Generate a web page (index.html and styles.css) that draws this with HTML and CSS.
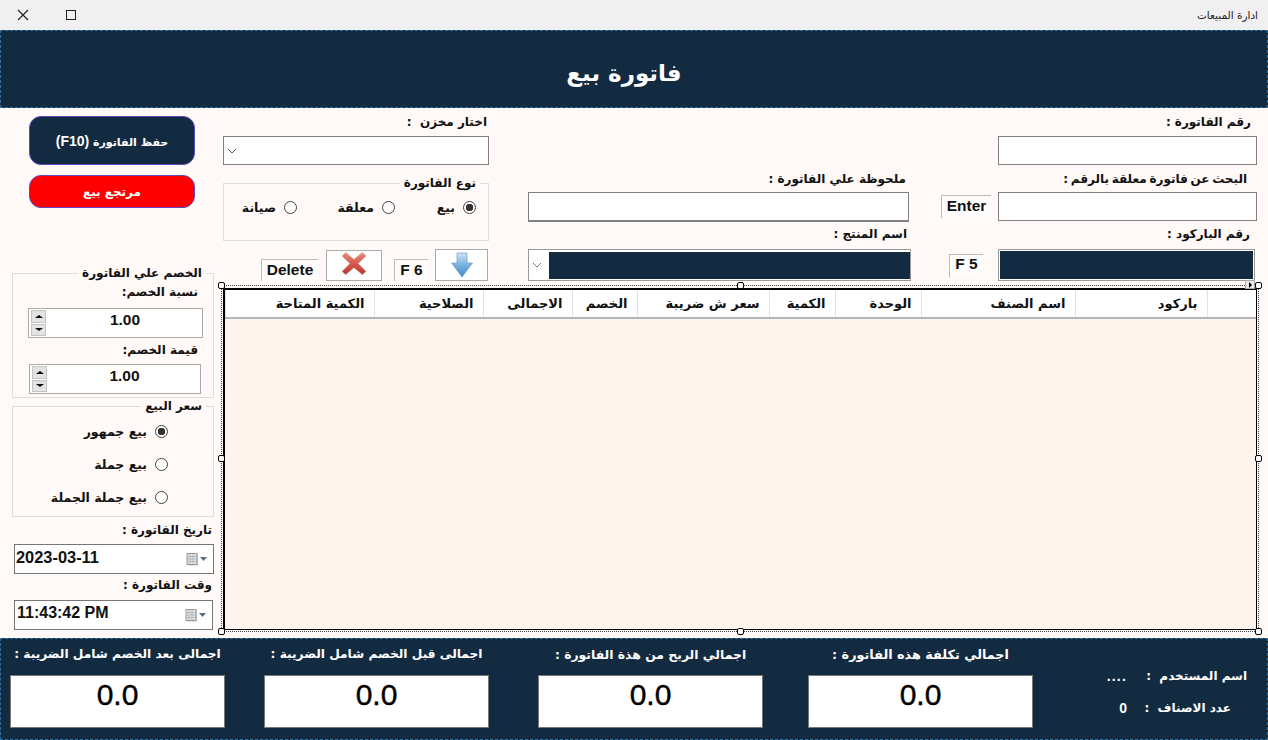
FILE: index.html
```html
<!DOCTYPE html>
<html lang="ar">
<head>
    <meta charset="UTF-8">
    <title>ادارة المبيعات</title>
    <link rel="stylesheet" href="styles.css">
</head>
<body>
    <div class="titlebar">
        <div class="win-btns">
            <svg class="win-icon" width="14" height="14" viewBox="0 0 14 14"><path d="M2 2L12 12M12 2L2 12" stroke="#222" stroke-width="1.2" fill="none"/></svg>
            <svg class="win-icon" width="14" height="14" viewBox="0 0 14 14"><rect x="2.5" y="2.5" width="9" height="9" stroke="#222" stroke-width="1" fill="none"/></svg>
        </div>
        <div class="win-title" dir="rtl">ادارة المبيعات</div>
    </div>

    <div class="header"><h1 dir="rtl">فاتورة بيع</h1></div>

    <div class="main">
        <div class="side">
            <button class="btn btn-save" dir="rtl">حفظ الفاتورة <span class="btn-key">(F10)</span></button>
            <button class="btn btn-return" dir="rtl">مرتجع بيع</button>

            <fieldset class="group group-discount" dir="rtl">
                <legend>الخصم علي الفاتورة</legend>
                <div class="disc-label">نسبة الخصم:</div>
                <div class="spin spin-a" dir="ltr">
                    <div class="spin-btns"><span class="spin-up"></span><span class="spin-down"></span></div>
                    <div class="spin-val">1.00</div>
                </div>
                <div class="disc-label disc-label-b">قيمة الخصم:</div>
                <div class="spin spin-b" dir="ltr">
                    <div class="spin-btns"><span class="spin-up"></span><span class="spin-down"></span></div>
                    <div class="spin-val">1.00</div>
                </div>
            </fieldset>

            <fieldset class="group group-price" dir="rtl">
                <legend>سعر البيع</legend>
                <label class="radio-row"><input type="radio" name="price" checked>بيع جمهور</label>
                <label class="radio-row"><input type="radio" name="price">بيع جملة</label>
                <label class="radio-row"><input type="radio" name="price">بيع جملة الجملة</label>
            </fieldset>

            <div class="date-label" dir="rtl">تاريخ الفاتورة :</div>
            <div class="date-box">
                <span>2023-03-11</span>
                <svg width="22" height="14" viewBox="0 0 22 14"><rect x="2" y="2.5" width="10" height="11" fill="#c9c9c9"/><rect x="1" y="1.5" width="10" height="11" fill="#dfe3e8" stroke="#9a9a9a"/><path d="M1 4.5H11M1 7H11M1 9.5H11M4 2V12M7 2V12" stroke="#a9adb2" stroke-width=".7"/><path d="M14 5H21L17.5 9Z" fill="#5b6b80"/></svg>
            </div>
            <div class="date-label date-label-b" dir="rtl">وقت الفاتورة :</div>
            <div class="date-box date-box-b">
                <span>11:43:42 PM</span>
                <svg width="22" height="14" viewBox="0 0 22 14"><rect x="2" y="2.5" width="10" height="11" fill="#c9c9c9"/><rect x="1" y="1.5" width="10" height="11" fill="#dfe3e8" stroke="#9a9a9a"/><path d="M1 4.5H11M1 7H11M1 9.5H11M4 2V12M7 2V12" stroke="#a9adb2" stroke-width=".7"/><path d="M14 5H21L17.5 9Z" fill="#5b6b80"/></svg>
            </div>
        </div>

        <div class="content">
            <div class="top">
                <div class="col col-a">
                    <div class="field-label label-store" dir="rtl">اختار مخزن &nbsp;:</div>
                    <div class="box combo">
                        <svg class="chev" width="10" height="6" viewBox="0 0 10 6"><path d="M1 1L5 5L9 1" stroke="#555" fill="none"/></svg>
                    </div>
                    <fieldset class="group group-type" dir="rtl">
                        <legend>نوع الفاتورة</legend>
                        <div class="type-row">
                            <label class="radio-row"><input type="radio" name="kind" checked>بيع</label>
                            <label class="radio-row"><input type="radio" name="kind">معلقة</label>
                            <label class="radio-row"><input type="radio" name="kind">صيانة</label>
                        </div>
                    </fieldset>
                    <div class="action-row">
                        <div class="tag tag-delete">Delete</div>
                        <button class="icon-btn icon-btn-x">
                            <svg width="26" height="25" viewBox="0 0 28 26">
                                <defs><linearGradient id="redg" x1="0" y1="0" x2="0" y2="1"><stop offset="0" stop-color="#e9907f"/><stop offset=".5" stop-color="#d9574a"/><stop offset="1" stop-color="#b9362c"/></linearGradient></defs>
                                <path d="M5 1L14 8.5L23 1L27 5L18.5 13L27 21.5L23 25L14 17.5L5 25L1 21.5L9.5 13L1 5Z" fill="url(#redg)" stroke="#c9b3ad" stroke-width=".6"/>
                            </svg>
                        </button>
                        <div class="tag tag-f6">F 6</div>
                        <button class="icon-btn icon-btn-down">
                            <svg width="22" height="26" viewBox="0 0 22 26">
                                <defs><linearGradient id="blueg" x1="0" y1="0" x2="0" y2="1"><stop offset="0" stop-color="#cfe4f6"/><stop offset=".5" stop-color="#79b2e2"/><stop offset="1" stop-color="#3f86c8"/></linearGradient></defs>
                                <path d="M6 1H16V11H21.5L11 25L.5 11H6Z" fill="url(#blueg)" stroke="#6c9cc4" stroke-width=".7"/>
                            </svg>
                        </button>
                    </div>
                </div>

                <div class="col col-b">
                    <div class="field-label label-note" dir="rtl">ملحوظة علي الفاتورة :</div>
                    <input class="box box-note" type="text">
                    <div class="field-label label-product" dir="rtl">اسم المنتج :</div>
                    <div class="box combo combo-product">
                        <svg class="chev" width="10" height="6" viewBox="0 0 10 6"><path d="M1 1L5 5L9 1" stroke="#777" fill="none"/></svg>
                        <div class="combo-fill"></div>
                    </div>
                </div>

                <div class="col col-c">
                    <div class="field-label label-c1" dir="rtl">رقم الفاتورة :</div>
                    <div class="input-row"><input class="box box-c" type="text"></div>
                    <div class="field-label label-c2" dir="rtl">البحث عن فاتورة معلقة بالرقم :</div>
                    <div class="input-row">
                        <div class="tag tag-enter">Enter</div>
                        <input class="box box-c" type="text">
                    </div>
                    <div class="field-label label-c3" dir="rtl">رقم الباركود :</div>
                    <div class="input-row">
                        <div class="tag tag-f5">F 5</div>
                        <div class="box box-barcode"></div>
                    </div>
                </div>
            </div>

            <div class="grid-frame">
                <span class="handle h-tl"></span><span class="handle h-tc"></span><span class="handle h-tr"></span>
                <span class="handle h-ml"></span><span class="handle h-mr"></span>
                <span class="handle h-bl"></span><span class="handle h-bc"></span><span class="handle h-br"></span>
                <span class="smart-tag"></span>
                <div class="grid-inner">
                    <table class="items" dir="rtl">
                        <colgroup>
                            <col class="c49"><col class="c132"><col class="c154"><col class="c86"><col class="c66">
                            <col class="c132"><col class="c65"><col class="c89"><col class="c109"><col>
                        </colgroup>
                        <thead>
                            <tr>
                                <th></th><th>باركود</th><th>اسم الصنف</th><th>الوحدة</th><th>الكمية</th>
                                <th>سعر ش ضريبة</th><th>الخصم</th><th>الاجمالى</th><th>الصلاحية</th><th>الكمية المتاحة</th>
                            </tr>
                        </thead>
                    </table>
                </div>
            </div>
        </div>
    </div>

    <div class="footer">
        <div class="total total-1">
            <div class="total-label" dir="rtl">اجمالى بعد الخصم شامل الضريبة :</div>
            <div class="total-val">0.0</div>
        </div>
        <div class="total total-2">
            <div class="total-label" dir="rtl">اجمالى قبل الخصم شامل الضريبة :</div>
            <div class="total-val">0.0</div>
        </div>
        <div class="total total-3">
            <div class="total-label" dir="rtl">اجمالي الربح من هذة الفاتورة :</div>
            <div class="total-val">0.0</div>
        </div>
        <div class="total total-4">
            <div class="total-label" dir="rtl">اجمالي تكلفة هذه الفاتورة :</div>
            <div class="total-val">0.0</div>
        </div>
        <div class="info">
            <div class="info-row">
                <div class="info-val info-dots">....</div>
                <div class="info-label info-user" dir="rtl">اسم المستخدم &nbsp;:</div>
            </div>
            <div class="info-row">
                <div class="info-val">0</div>
                <div class="info-label info-count" dir="rtl">عدد الاصناف &nbsp;:</div>
            </div>
        </div>
    </div>
</body>
</html>
```

FILE: styles.css
```css
* {
    box-sizing: border-box;
}

body {
    margin: 0;
    width: 1268px;
    height: 740px;
    overflow: hidden;
    font-family: "DejaVu Sans", "Liberation Sans", sans-serif;
    font-size: 12px;
    font-weight: bold;
    color: #111;
    background: #fff9f7;
}

/* title bar */
.titlebar {
    height: 30px;
    background: #f0f0f0;
    display: flex;
    align-items: center;
    justify-content: space-between;
    padding: 0 10px 0 16px;
}

.win-btns {
    display: flex;
    gap: 34px;
}

.win-title {
    font-size: 10.5px;
    font-weight: normal;
    color: #222;
}

.header {
    height: 78px;
    background: #132b40;
    border: 1px dashed #2f6f9f;
    display: flex;
    align-items: center;
    justify-content: center;
    padding-top: 7px;
}

.header h1 {
    margin: 0 0 0 -20px;
    font-size: 23px;
    font-weight: bold;
    color: #fff;
}

.main {
    height: 530px;
    display: flex;
    gap: 7px;
    padding-left: 12px;
}

/* left column */
.side {
    width: 202px;
    display: flex;
    flex-direction: column;
}

.btn {
    margin-left: 17px;
    width: 166px;
    border: 1.5px solid #5a48c0;
    border-radius: 12px;
    color: #fff;
    font-family: inherit;
    font-weight: bold;
    font-size: 11px;
    padding: 0;
}

.btn-key {
    font-family: "Liberation Sans", sans-serif;
    font-size: 14px;
}

.btn-save {
    margin-top: 8px;
    height: 49px;
    background: #132b40;
}

.btn-return {
    margin-top: 10px;
    height: 33px;
    background: #ff0000;
    font-size: 12px;
}

.group {
    margin: 0;
    padding: 0;
    border: 1px solid #ddd;
    min-width: 0;
}

.group legend {
    padding: 0 4px;
    height: 16px;
    line-height: 16px;
    font-size: 12px;
}

.group-discount {
    margin-top: 57px;
    height: 133px;
}

.group-discount legend {
    margin-right: 7px;
}

.disc-label {
    height: 27px;
    line-height: 22px;
    padding-right: 15px;
}

.disc-label-b {
    height: 26px;
    line-height: 25px;
}

.spin {
    height: 30px;
    border: 1px solid #aaa;
    background: #fff;
    display: flex;
    align-items: stretch;
    padding: 1px;
}

.spin-a {
    margin: 0 10px 0 15px;
    width: 175px;
}

.spin-b {
    margin: 0 12px 0 16px;
    width: 172px;
}

.spin-btns {
    width: 15px;
    display: flex;
    flex-direction: column;
    gap: 1px;
    margin-left: 1px;
}

.spin-up,
.spin-down {
    flex: 1;
    background: #e3e3e3;
    border: 1px solid #c4c4c4;
    display: flex;
    align-items: center;
    justify-content: center;
}

.spin-up::before {
    content: "";
    border: 4px solid transparent;
    border-top: 0;
    border-bottom: 3px solid #000;
}

.spin-down::before {
    content: "";
    border: 4px solid transparent;
    border-bottom: 0;
    border-top: 3px solid #000;
}

.spin-val {
    flex: 1;
    text-align: center;
    padding-left: 3px;
    font-family: "Liberation Sans", sans-serif;
    font-size: 15.5px;
    line-height: 20px;
}

.group-price {
    height: 119px;
    padding-top: 1px;
}

.group-price legend {
    margin-right: 7px;
}

.radio-row {
    display: flex;
    align-items: center;
    gap: 8px;
    font-size: 12.5px;
}

.group-price .radio-row {
    height: 33px;
    padding-right: 45px;
}

.radio-row input {
    appearance: none;
    flex: none;
    width: 13px;
    height: 13px;
    margin: 0;
    border: 1px solid #444;
    border-radius: 50%;
    background: #fff;
}

.radio-row input:checked {
    background: radial-gradient(circle, #333 0 3.5px, #fff 4px);
}

.date-label {
    height: 27px;
    line-height: 27px;
    padding-right: 2px;
}

.date-label-b {
    height: 26px;
    line-height: 22px;
}

.date-box {
    margin-left: 2px;
    width: 200px;
    height: 30px;
    border: 1px solid #777;
    background: #fff;
    display: flex;
    align-items: center;
    justify-content: space-between;
    padding: 0 5px 0 1px;
    font-family: "Liberation Sans", sans-serif;
    font-size: 16.4px;
}

.date-box span {
    margin-bottom: 4px;
}

.date-box-b {
    width: 199px;
    padding-left: 2px;
    font-size: 16px;
}

/* top form */
.content {
    width: 1038px;
}

.top {
    height: 177px;
    display: flex;
    padding: 0 2px;
}

.col {
    display: flex;
    flex-direction: column;
}

.col-a {
    width: 266px;
}

.col-b {
    width: 383px;
    margin-left: 39px;
    padding-top: 57px;
}

.col-c {
    width: 316px;
    margin-left: 30px;
}

.field-label {
    display: flex;
    align-items: center;
    flex: none;
}

.label-store {
    height: 28px;
    padding-right: 2px;
}

.label-note {
    height: 27px;
    padding-right: 5px;
}

.label-product {
    height: 27px;
    padding: 0 4px 3px 0;
}

.label-c1 {
    height: 28px;
    padding-right: 6px;
}

.label-c2 {
    height: 27px;
    padding-right: 10px;
    word-spacing: -1.5px;
}

.label-c3 {
    height: 28px;
    padding: 0 7px 2px 0;
}

.box {
    display: block;
    border: 1px solid #808080;
    background: #fff;
    margin: 0;
    padding: 0;
}

.combo {
    height: 29px;
    display: flex;
    align-items: center;
    padding-left: 3px;
    flex: none;
}

.box-note {
    width: 381px;
    height: 30px;
    border-bottom-width: 2px;
    flex: none;
}

.combo-product {
    width: 383px;
    height: 32px;
    gap: 7px;
    border-color: #999;
}

.combo-fill {
    width: 361px;
    height: 27px;
    background: #132b40;
}

.input-row {
    display: flex;
    justify-content: flex-end;
    align-items: center;
}

.box-c {
    width: 259px;
    height: 29px;
}

.box-barcode {
    width: 257px;
    height: 32px;
    margin-right: 2px;
    background: #132b40;
    border-color: #999;
    box-shadow: inset 0 0 0 1px #fff;
}

.tag {
    border-top: 1px solid #bbb;
    border-left: 1px solid #bbb;
    background: #fffdfc;
    font-family: "Liberation Sans", sans-serif;
    font-size: 15.5px;
    display: flex;
    align-items: center;
    justify-content: center;
    flex: none;
}

.tag-enter {
    width: 50px;
    height: 23px;
    margin-right: 7px;
    padding-bottom: 3px;
}

.tag-f5 {
    width: 34px;
    height: 23px;
    margin-right: 15px;
    padding-bottom: 3px;
}

.group-type {
    margin-top: 10px;
    height: 66px;
}

.group-type legend {
    margin-right: 8px;
}

.type-row {
    display: flex;
    padding-top: 9px;
}

.type-row .radio-row {
    padding-right: 12px;
}

.type-row .radio-row:nth-child(1) {
    width: 81px;
}

.type-row .radio-row:nth-child(2) {
    width: 98px;
}

.action-row {
    margin-top: 8px;
    display: flex;
    align-items: flex-start;
    padding-left: 38px;
}

.icon-btn {
    background: #fff;
    border: 1px solid #aaa;
    padding: 0;
    height: 31px;
    display: flex;
    align-items: center;
    justify-content: center;
    flex: none;
}

.icon-btn-x {
    width: 56px;
    margin: 1px 12px 0 8px;
    padding-bottom: 5px;
}

.icon-btn-down {
    width: 53px;
    height: 32px;
    margin-left: 7px;
    padding-bottom: 1px;
}

.tag-delete {
    width: 57px;
    height: 22px;
    margin-top: 10px;
    padding-bottom: 1px;
}

.tag-f6 {
    width: 34px;
    height: 22px;
    margin-top: 10px;
    padding-bottom: 1px;
}

/* grid with designer selection frame */
.grid-frame {
    position: relative;
    height: 347px;
    border: 1px dotted #444;
    padding: 2px 1px 0;
}

.grid-inner {
    height: 342px;
    border: 1px solid #000;
    border-width: 2px 1px 1px 2px;
    background: #fff3ee;
}

.items {
    width: 100%;
    table-layout: fixed;
    border-collapse: collapse;
    background: #fff;
    border-bottom: 2px solid #b5b5b5;
}

.items th {
    height: 28px;
    padding: 0 9px;
    font-size: 13px;
    text-align: right;
    border-left: 1px solid #e2e2e2;
    white-space: nowrap;
}

.c49 { width: 49px; }
.c132 { width: 132px; }
.c154 { width: 154px; }
.c86 { width: 86px; }
.c66 { width: 66px; }
.c65 { width: 65px; }
.c89 { width: 89px; }
.c109 { width: 109px; }

.handle {
    position: absolute;
    width: 7px;
    height: 7px;
    background: #fff;
    border: 1px solid #000;
    border-radius: 2px;
    z-index: 2;
}

.h-tl, .h-tc, .h-tr { top: -4px; }
.h-ml, .h-mr { top: 169px; }
.h-bl, .h-bc, .h-br { bottom: -4px; }
.h-tl, .h-ml, .h-bl { left: -4px; }
.h-tc, .h-bc { left: 515px; }
.h-tr, .h-mr, .h-br { right: -4px; }

.smart-tag {
    position: absolute;
    top: -6px;
    right: 3px;
    width: 10px;
    height: 9px;
    background: #e8e8e8;
    border: 1px solid #aaa;
}

.smart-tag::before {
    content: "";
    position: absolute;
    left: 3px;
    top: 1px;
    border: 3px solid transparent;
    border-right: 0;
    border-left: 3px solid #000;
}

/* bottom totals */
.footer {
    height: 102px;
    background: #132b40;
    border: 1px dashed #2f6f9f;
    display: flex;
    padding-left: 9px;
    color: #fff;
}

.total {
    width: 225px;
    display: flex;
    flex-direction: column;
}

.total-1 { width: 215px; }
.total-2 { margin-left: 39px; }
.total-3 { margin-left: 49px; }
.total-4 { margin-left: 45px; }

.total-label {
    height: 36px;
    padding-bottom: 6px;
    display: flex;
    align-items: center;
    justify-content: center;
    white-space: nowrap;
    font-size: 12.4px;
}

.total-1 .total-label,
.total-2 .total-label {
    font-size: 12.2px;
}

.total-4 .total-label {
    font-size: 12.8px;
}

.total-val {
    height: 53px;
    background: #fff;
    border: 1px solid #777;
    color: #000;
    text-align: center;
    font-family: "Liberation Sans", sans-serif;
    font-weight: normal;
    font-size: 30px;
    line-height: 38px;
    -webkit-text-stroke: 0.4px #000;
}

.info {
    flex: 1;
    padding-top: 21px;
}

.info-row {
    height: 32px;
    display: flex;
    align-items: center;
}

.info-val {
    width: 94px;
    text-align: right;
    font-family: "Liberation Sans", sans-serif;
    font-size: 14px;
}

.info-dots {
    letter-spacing: 1.2px;
}

.info-label {
    flex: 1;
    white-space: nowrap;
}

.info-user {
    padding-right: 20px;
}

.info-count {
    padding-right: 36px;
}
```
